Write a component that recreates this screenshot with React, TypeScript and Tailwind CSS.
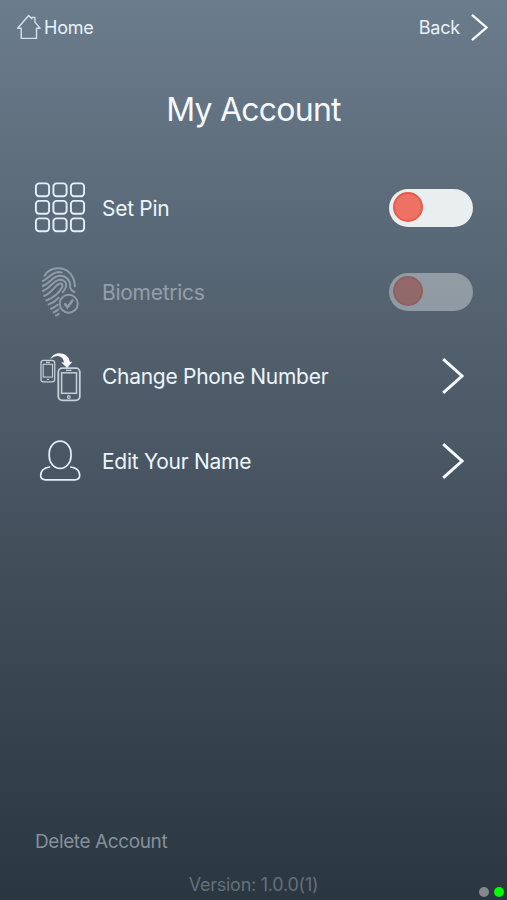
import type { ReactNode } from "react";
import { clsx } from "clsx";

interface SettingRowProps {
  icon: ReactNode;
  label: string;
  disabled?: boolean;
  children: ReactNode;
}

// ─── Icons ───────────────────────────────────────────────────

function HomeIcon() {
  return (
    <svg className="h-[26px] w-[26px] shrink-0" viewBox="0 0 26 26" fill="none" stroke="#d3e0ec" strokeWidth="1.4" strokeLinejoin="round">
      <path d="M1.6 14.2 12.7 1.5l3.2 3.3V3.4h3v4.700l5.200 6.100h-3.600v10.200H5.200V14.200Z" />
    </svg>
  );
}

function ChevronIcon({ className }: { className: string }) {
  return (
    <svg className={className} viewBox="0 0 22 36" fill="none" stroke="#f4faff" strokeWidth="3" preserveAspectRatio="none">
      <path d="M1.2 1.2 20 18 1.2 34.8" />
    </svg>
  );
}

function KeypadIcon() {
  const offsets = [0, 17.5, 35];
  return (
    <svg className="size-[60px]" viewBox="0 0 60 60" fill="none" stroke="#e3effa" strokeWidth="1.9">
      {offsets.map((y) =>
        offsets.map((x) => (
          <rect key={`${x}-${y}`} x={5.9 + x} y={5.4 + y} width="13.2" height="12.8" rx="3.2" />
        ))
      )}
    </svg>
  );
}

function FingerprintIcon() {
  return (
    <svg className="size-[60px]" viewBox="0 0 60 60" fill="none" stroke="#e3effa" strokeWidth="2" strokeLinecap="round">
      <path d="M14.5 13.800C17.500 8.800 22.300 6.300 28 6.300c9.500 0 16.500 6.700 16.900 18.200" />
      <path d="M12.700 19.200c6-2.600 8.300-9 16.300-9.200 1 0 1.900.1 2.700.4" />
      <path d="M12.700 24c8-3.200 9.800-9.800 16.800-10.200 6.800-.3 11 4.700 10.600 10.500 0 2.500 1.200 4.400 4.300 5.800" />
      <path d="M13 29c8.500-3.500 10.300-10.900 16.800-11.300 4.500-.2 7 3.300 6.200 6.900-.4 1.900-1.700 3.700-3.200 5.500" />
      <path d="M14 34c8.500-3.300 10.800-10.700 15.300-12.300 2.500-.7 4 1.400 2.800 3.600-2.600 4.800-8 10.300-15.800 13.200" />
      <path d="M18.700 42.400c4-1.500 7.300-3.800 10-6.600" />
      <path d="M21 46.700c2.700-1.100 4.700-2.300 6.700-4" />
      <path d="M23.500 50.500c1.900-.9 3.300-1.800 4.700-3" />
      <path d="M26 53.600c1-.5 1.900-1.100 2.800-1.900" />
      <circle cx="38.700" cy="41.700" r="9" />
      <path d="m35 42.200 2.500 3 5-6.700" strokeWidth="2.600" />
    </svg>
  );
}

function PhoneSwapIcon() {
  return (
    <svg className="size-[60px]" viewBox="0 0 60 60" fill="none" stroke="#c5d0d8">
      <rect x="11" y="13.300" width="13.700" height="21.500" rx="2.600" strokeWidth="1.300" />
      <rect x="13.200" y="17.300" width="9.300" height="12.800" strokeWidth="1.100" />
      <path d="M16 15.300h4M17 32.500h1.900" strokeWidth="1.200" />
      <rect x="28.300" y="21.100" width="21.500" height="32.200" rx="4" strokeWidth="1.800" />
      <rect x="31.600" y="25.800" width="14.900" height="20.500" strokeWidth="1.500" />
      <path d="M36 23.400h5.500" strokeWidth="1.300" />
      <circle cx="38.800" cy="50" r="1.300" strokeWidth="1.200" />
      <path
        d="M20 12.600C22.300 7.800 26 5.800 30.500 6.200c5.500.7 9 4.200 9.300 8.900l2.500-.3-5.100 6.300-5.900-5.500 2.600-.1C33.700 12 31.800 9.700 28.800 9.200c-3.300-.5-6 .8-8.800 3.400Z"
        fill="#f8fcff"
        stroke="none"
      />
    </svg>
  );
}

function PersonIcon() {
  return (
    <svg className="size-[60px]" viewBox="0 0 60 60" fill="none" stroke="#e3effa" strokeWidth="1.700" strokeLinecap="round">
      <rect x="19.200" y="10.100" width="21.800" height="27.300" rx="10.900" ry="12.500" />
      <path d="M19.600 36c-6 .9-8.900 3.500-8.900 8.300 0 3.300 1.800 4.600 5 4.600h29c3.200 0 5-1.300 5-4.600 0-4.800-2.900-7.400-8.900-8.300" />
    </svg>
  );
}

// ─── Controls ────────────────────────────────────────────────

function Toggle({ label, disabled }: { label: string; disabled?: boolean }) {
  return (
    <button
      role="switch"
      aria-checked={false}
      aria-label={label}
      disabled={disabled}
      className="mb-px mr-[34px] flex h-[38px] w-[84px] items-center rounded-full bg-[#e9eeee] pb-px pl-1"
    >
      <span className="size-[30px] rounded-full border-2 border-[#e65b4b] bg-[#ee7263]" />
    </button>
  );
}

function SettingRow({ icon, label, disabled, children }: SettingRowProps) {
  return (
    <li className={clsx("flex h-[84.300px] items-center pl-[30px]", disabled && "opacity-40")}>
      {icon}
      <span className="ml-3 flex-1 text-[21px] tracking-[-0.28px] text-[#edf5fc]">{label}</span>
      {children}
    </li>
  );
}

export default function App() {
  return (
    <div className="relative flex h-[900px] w-[507px] flex-col overflow-hidden bg-linear-to-b from-[#6b7c8c] via-[#4a5764] to-[#2a3640] font-['Inter',sans-serif] leading-none">
      <header className="flex h-[54px] items-center justify-between pl-4 pr-[19px] text-[18px] tracking-[-0.2px] text-[#e8f2fb]">
        <button className="flex items-center gap-0.5">
          <HomeIcon />
          <span className="pt-0.5">Home</span>
        </button>
        <button className="flex items-center gap-[11px]">
          <span className="pt-px">Back</span>
          <ChevronIcon className="h-[27px] w-[17px]" />
        </button>
      </header>

      <h1 className="mt-10 text-center text-[32px] tracking-[-0.75px] text-[#f4f9ff]">My Account</h1>

      <ul className="mt-10">
        <SettingRow icon={<KeypadIcon />} label="Set Pin">
          <Toggle label="Set Pin" />
        </SettingRow>
        <SettingRow icon={<FingerprintIcon />} label="Biometrics" disabled>
          <Toggle label="Biometrics" disabled />
        </SettingRow>
        <SettingRow icon={<PhoneSwapIcon />} label="Change Phone Number">
          <ChevronIcon className="mb-px mr-[43px] h-9 w-[22px]" />
        </SettingRow>
        <SettingRow icon={<PersonIcon />} label="Edit Your Name">
          <ChevronIcon className="mb-px mr-[43px] h-9 w-[22px]" />
        </SettingRow>
      </ul>

      <footer className="mt-auto pb-1.5">
        <button className="ml-[35px] block text-[19px] tracking-[-0.4px] text-[#85909a]">Delete Account</button>
        <p className="mt-[25px] text-center text-[18px] tracking-[-0.25px] text-[#64707a]">Version: 1.0.0(1)</p>
      </footer>

      {/* Status dots */}
      <div className="absolute bottom-[3px] right-[3px] flex gap-[5px]">
        <span className="size-2.5 rounded-full bg-[#84878b]" />
        <span className="size-2.5 rounded-full bg-[#00ff00]" />
      </div>
    </div>
  );
}
